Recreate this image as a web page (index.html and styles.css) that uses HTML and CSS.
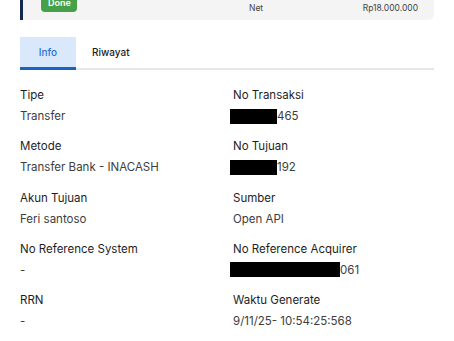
FILE: index.html
```html
<!DOCTYPE html>
<html lang="en">
<head>
    <meta charset="UTF-8">
    <meta name="viewport" content="width=device-width, initial-scale=1.0">
    <title>Detail Transaksi</title>
    <link rel="stylesheet" href="styles.css">
</head>
<body>
    <!-- Summary card (scrolled partly out of view) -->
    <div class="summary-card">
        <div class="summary-row">
            <span class="badge-done">Done</span>
            <span class="summary-label">Net</span>
            <span class="summary-value">Rp18.000.000</span>
        </div>
    </div>

    <!-- Tabs -->
    <div class="tabs">
        <button class="tab active">Info</button>
        <button class="tab">Riwayat</button>
    </div>

    <!-- Info fields -->
    <div class="info-grid">
        <div class="field">
            <div class="field-label">Tipe</div>
            <div class="field-value">Transfer</div>
        </div>
        <div class="field">
            <div class="field-label">No Transaksi</div>
            <div class="field-value"><span class="redacted redacted-sm"></span>465</div>
        </div>
        <div class="field">
            <div class="field-label">Metode</div>
            <div class="field-value">Transfer Bank - INACASH</div>
        </div>
        <div class="field">
            <div class="field-label">No Tujuan</div>
            <div class="field-value"><span class="redacted redacted-sm"></span>192</div>
        </div>
        <div class="field">
            <div class="field-label">Akun Tujuan</div>
            <div class="field-value">Feri santoso</div>
        </div>
        <div class="field">
            <div class="field-label">Sumber</div>
            <div class="field-value">Open API</div>
        </div>
        <div class="field">
            <div class="field-label">No Reference System</div>
            <div class="field-value">-</div>
        </div>
        <div class="field">
            <div class="field-label">No Reference Acquirer</div>
            <div class="field-value"><span class="redacted redacted-lg"></span>061</div>
        </div>
        <div class="field">
            <div class="field-label">RRN</div>
            <div class="field-value">-</div>
        </div>
        <div class="field">
            <div class="field-label">Waktu Generate</div>
            <div class="field-value">9/11/25- 10:54:25:568</div>
        </div>
    </div>
</body>
</html>
```

FILE: styles.css
```css
:root {
    --navy: #0f2a4c;
    --card-bg: #f4f4f5;
    --green: #45a049;
    --blue: #1565c0;
    --blue-text: #2d6fcf;
    --blue-light: #d9e9fb;
    --line: #e6e7ea;
    --label: #1e1e1e;
    --value: #3d3d3d;
}

body {
    font-family: Inter, 'Noto Sans', sans-serif;
    font-size: 11.5px;
    margin: 0;
    padding: 0;
    background-color: white;
    color: var(--label);
}

.summary-card {
    margin: -10px 20px 0;
    padding: 4px 16px 8px 18px;
    background-color: var(--card-bg);
    border-left: 3px solid var(--navy);
    border-radius: 0 6px 6px 0;
}

.summary-row {
    display: flex;
    align-items: center;
    height: 18px;
}

.badge-done {
    background-color: var(--green);
    color: white;
    font-size: 9px;
    font-weight: 600;
    border-radius: 4px;
    padding: 0 7px;
    line-height: 18px;
    width: 22px;
    text-align: center;
}

.summary-label {
    margin-left: 172px;
    font-size: 8.5px;
    color: #444;
    padding-top: 10px;
}

.summary-value {
    margin-left: auto;
    font-size: 8.5px;
    color: #444;
    padding-top: 10px;
}

.tabs {
    display: flex;
    margin: 17px 20px 0;
    border-bottom: 2px solid var(--line);
}

.tab {
    font-family: inherit;
    font-size: 10px;
    font-weight: 500;
    background: none;
    border: none;
    border-bottom: 3px solid transparent;
    margin-bottom: -2px;
    height: 33px;
    padding: 0 16px;
    color: var(--label);
    cursor: pointer;
}

.tab.active {
    width: 56px;
    background-color: var(--blue-light);
    color: var(--blue-text);
    border-bottom-color: var(--blue);
}

.info-grid {
    display: grid;
    grid-template-columns: 1fr 1fr;
    column-gap: 12px;
    row-gap: 14.25px;
    margin: 17px 20px 0;
}

.field-label {
    line-height: 16px;
    color: var(--label);
    margin-bottom: 5px;
}

.field-value {
    line-height: 16px;
    color: var(--value);
    display: flex;
    align-items: center;
}

.redacted {
    display: inline-block;
    height: 15px;
    background-color: black;
    margin-left: -3px;
}

.redacted-sm {
    width: 47px;
}

.redacted-lg {
    width: 110px;
}
```
